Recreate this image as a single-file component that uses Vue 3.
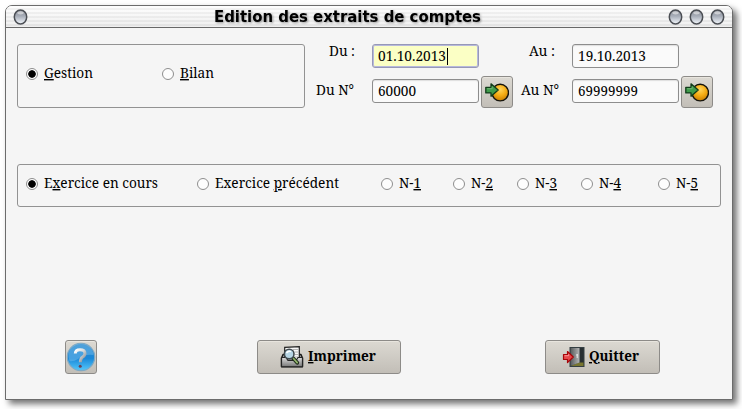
<script setup>
import { ref, h } from 'vue'

const account = ref('G')
const period = ref(0)

const accounts = [
  { id: 'G', parts: ['', 'G', 'estion'], w: 49 },
  { id: 'B', parts: ['', 'B', 'ilan'], w: 34 },
]
const periods = [
  { parts: ['E', 'x', 'ercice en cours'], w: 114 },
  { parts: ['Exercice ', 'p', 'récédent'], w: 124 },
  { parts: ['N-', '1', ''], w: 22 },
  { parts: ['N-', '2', ''], w: 22 },
  { parts: ['N-', '3', ''], w: 22 },
  { parts: ['N-', '4', ''], w: 22 },
  { parts: ['N-', '5', ''], w: 22 },
]

// Caption fitted to a given width, with an underlined accelerator letter
const Caption = (props) =>
  h('svg', { class: 'caption', width: props.w, height: 20 }, [
    h('text', { x: 0, y: 14, textLength: props.w, lengthAdjust: 'spacingAndGlyphs' }, [
      props.parts[0],
      h('tspan', { class: 'accel' }, props.parts[1]),
      props.parts[2],
    ]),
  ])
Caption.props = ['parts', 'w']

const Orb = () =>
  h('svg', { class: 'orb', width: 15, height: 16, viewBox: '0 0 15 16' }, [
    h('ellipse', { cx: 7.5, cy: 8, rx: 6.2, ry: 6.9, fill: 'url(#orbFill)', stroke: '#4c4f55', 'stroke-width': 1.5 }),
    h('ellipse', { cx: 7.5, cy: 3.8, rx: 3.2, ry: 1.6, fill: '#fff', opacity: 0.5 }),
  ])

const PickIcon = () =>
  h('svg', { width: 24, height: 20, viewBox: '0 0 24 20' }, [
    h('circle', { cx: 15.2, cy: 10.6, r: 8.3, fill: 'url(#ballFill)', stroke: '#17150e', 'stroke-width': 1.4 }),
    h('path', { d: 'M0.8 5.3H6V1.8L13.2 8 6 14.2V10.9H0.8Z', fill: '#3f9b4a', stroke: '#123c1a', 'stroke-width': 1.3, 'stroke-linejoin': 'round' }),
    h('path', { d: 'M2.2 6.7H7.2V4.6', fill: 'none', stroke: '#77bd7b', 'stroke-width': 0.8 }),
  ])
</script>

<template>
  <div class="window">
    <svg class="defs" width="0" height="0">
      <defs>
        <linearGradient id="orbFill" x1="0" y1="0" x2="0" y2="1">
          <stop offset="0" stop-color="#878b94" />
          <stop offset=".45" stop-color="#a9afba" />
          <stop offset="1" stop-color="#f2f7fc" />
        </linearGradient>
        <radialGradient id="ballFill" cx=".5" cy=".32" r=".7">
          <stop offset="0" stop-color="#ffd45a" />
          <stop offset=".5" stop-color="#f5ad15" />
          <stop offset="1" stop-color="#c67b00" />
        </radialGradient>
      </defs>
    </svg>

    <header class="titlebar">
      <Orb />
      <svg class="title" width="270" height="20">
        <text x="1" y="15" textLength="267" lengthAdjust="spacingAndGlyphs">Edition des extraits de comptes</text>
      </svg>
      <div class="controls"><Orb /><Orb /><Orb /></div>
    </header>

    <main class="body">
      <section class="top">
        <div class="group accounts">
          <label v-for="a in accounts" :key="a.id" class="option" @click="account = a.id">
            <span class="radio" :class="{ on: account === a.id }"></span>
            <Caption :parts="a.parts" :w="a.w" />
          </label>
        </div>
        <div class="fields">
          <div class="name date"><Caption :parts="['Du :', '', '']" :w="26" /></div>
          <div class="field date active"><Caption :parts="['01.10.2013', '', '']" :w="68" /><i class="caret"></i></div>
          <span></span>
          <div class="name date"><Caption :parts="['Au :', '', '']" :w="26" /></div>
          <div class="field date"><Caption :parts="['19.10.2013', '', '']" :w="68" /></div>
          <span></span>
          <div class="name"><Caption :parts="['Du N°', '', '']" :w="38" /></div>
          <div class="field number"><Caption :parts="['60000', '', '']" :w="38" /></div>
          <button class="btn"><PickIcon /></button>
          <div class="name second"><Caption :parts="['Au N°', '', '']" :w="38" /></div>
          <div class="field number"><Caption :parts="['69999999', '', '']" :w="60" /></div>
          <button class="btn"><PickIcon /></button>
        </div>
      </section>

      <section class="group periods">
        <label v-for="(p, i) in periods" :key="i" class="option" @click="period = i">
          <span class="radio" :class="{ on: period === i }"></span>
          <Caption :parts="p.parts" :w="p.w" />
        </label>
      </section>

      <footer class="actions">
        <button class="btn help">
          <svg width="30" height="30" viewBox="0 0 30 30">
            <defs>
              <linearGradient id="helpFill" x1="0" y1="0" x2="0" y2="1">
                <stop offset="0" stop-color="#2a86c9" />
                <stop offset=".55" stop-color="#1a88d8" />
                <stop offset="1" stop-color="#55c8fb" />
              </linearGradient>
              <linearGradient id="markFill" x1="0" y1="0" x2="1" y2="1">
                <stop offset="0" stop-color="#fff" />
                <stop offset=".45" stop-color="#d5dadd" />
                <stop offset="1" stop-color="#777f86" />
              </linearGradient>
            </defs>
            <circle cx="15" cy="15" r="13.7" fill="url(#helpFill)" stroke="#7fa9c4" stroke-width="1.2" />
            <path d="M2.5 15A12.5 12.5 0 0 1 27.5 13Q18 12 12 17 7 20 3.5 19Z" fill="#7cc2ed" opacity=".45" />
            <path d="M9.3 11.5Q9.5 7.8 14 7.8 19 7.8 19 11.5 19 13.7 16.4 15.2 14.4 16.5 14.4 20.3" fill="none" stroke="url(#markFill)" stroke-width="3" />
            <circle cx="14.2" cy="24.3" r="1.5" fill="#6e4257" />
          </svg>
        </button>
        <button class="btn print">
          <svg width="24" height="24" viewBox="0 0 24 24">
            <defs>
              <linearGradient id="trayFill" x1="0" y1="0" x2="0" y2="1">
                <stop offset="0" stop-color="#dedede" />
                <stop offset="1" stop-color="#777" />
              </linearGradient>
            </defs>
            <path d="M3 9.5H21L22.5 13V21.5H1.5V13Z" fill="#9c9c9c" stroke="#171717" stroke-width="1.4" stroke-linejoin="round" />
            <path d="M4.7 2.4 19.3 1.7V15H4.7Z" fill="#f7f7f7" stroke="#202020" stroke-width="1.2" />
            <path d="M13 4.5H18M15 7H18M15 9.5H18M15 12H18" stroke="#b5b5b5" />
            <path d="M1.5 12.5H6L8 15.5H16L18 12.5H22.5V21.8H1.5Z" fill="url(#trayFill)" stroke="#252525" stroke-width="1.2" stroke-linejoin="round" />
            <path d="M12.5 12.5 17.3 17.8" stroke="#1f2b1b" stroke-width="3.8" stroke-linecap="round" />
            <path d="M13.5 13.5 17.2 17.6" stroke="#92b56b" stroke-width="1.7" stroke-linecap="round" />
            <circle cx="9.2" cy="9" r="4.8" fill="#b6d5e5" stroke="#414a4f" stroke-width="1.6" />
            <path d="M6.5 8.2Q8 5.4 11 6.6" fill="none" stroke="#fff" stroke-width="1.4" />
          </svg>
          <Caption :parts="['', 'I', 'mprimer']" :w="68" />
        </button>
        <button class="btn quit">
          <svg width="24" height="24" viewBox="0 0 24 24">
            <defs>
              <linearGradient id="doorFill" x1="0" y1="0" x2="1" y2="0">
                <stop offset="0" stop-color="#575a5b" />
                <stop offset="1" stop-color="#b4b6b6" />
              </linearGradient>
            </defs>
            <rect x="8" y="2.5" width="14" height="19" fill="#272e31" stroke="#343e42" />
            <path d="M8.5 21 17 17.5H21.5V21Z" fill="#77752f" />
            <path d="M8.5 3H17.5V17.5L8.5 21Z" fill="url(#doorFill)" />
            <path d="M15.2 9V13M14.3 10H15.5" stroke="#eee" stroke-width="1" />
            <path d="M1.5 9.5H5.5V6.5L11.3 12 5.5 17.5V14.5H1.5Z" fill="#e5484b" stroke="#a80509" stroke-width="1.2" stroke-linejoin="round" />
            <path d="M2.5 10.7H6.7V9.2" fill="none" stroke="#ffaaaa" stroke-width=".8" />
          </svg>
          <Caption :parts="['', 'Q', 'uitter']" :w="50" />
        </button>
      </footer>
    </main>
  </div>
</template>

<style>
html { background: #fff; min-height: 100%; }
#app { display: flow-root; height: 409px; overflow: hidden; }
</style>

<style scoped>
* { box-sizing: border-box; }
.window {
  width: 728px; height: 395px; margin: 5px 0 0 5px;
  border: 1px solid #6c6c6c; border-radius: 7px 7px 0 0;
  background: #f5f5f5; box-shadow: 4px 4px 6px rgba(0, 0, 0, .55);
  font-family: "Noto Serif", "DejaVu Serif Condensed", "DejaVu Serif", serif;
  font-size: 14px; color: #000;
}
.defs { display: block; }
.titlebar {
  height: 22px; border-bottom: 1px solid #686868; border-radius: 6px 6px 0 0;
  background: linear-gradient(rgba(255,255,255,.5), rgba(215,215,215,.35)), repeating-linear-gradient(#fcfcfc 0 2px, #e9e9e9 2px 4px);
  display: grid; grid-template-columns: 207px 270px 1fr; align-items: center;
}
.orb { display: block; margin-left: 7px; }
.title { display: block; font: bold 15px "DejaVu Sans", sans-serif; filter: drop-shadow(1px 1px 1px rgba(0,0,0,.4)); }
.title text { fill: #000; }
.controls { display: flex; justify-content: flex-end; gap: 6px; padding-right: 7px; }
.controls .orb { margin: 0; }
.body { padding: 16px 11px 0; }
.top { display: flex; height: 64px; }
.group { border: 1px solid #929292; border-radius: 3px; }
.accounts { width: 288px; height: 64px; padding: 19px 0 0 7px; display: grid; grid-template-columns: 136px 1fr; align-items: start; }
.option { display: flex; align-items: center; height: 20px; }
.radio {
  width: 12px; height: 12px; margin: 0 6px 0 1px; flex: none;
  border: 1px solid #8e8e8e; border-radius: 50%; background: #fdfdfd;
}
.radio.on { background: radial-gradient(circle, #000 0 3.4px, #fdfdfd 4.1px); }
:deep(.caption) { display: block; overflow: visible; flex: none; }
:deep(.caption text) { fill: #000; }
:deep(.accel) { text-decoration: underline; text-decoration-thickness: 1px; text-underline-offset: 2px; text-decoration-skip-ink: none; }
.fields {
  display: grid; grid-template-columns: 67px 107px 34px 59px 107px 34px;
  grid-template-rows: 32px 32px; align-items: center;
}
.name { display: flex; justify-content: flex-end; padding: 0 18px 2px 0; }
.name.second { padding-right: 13px; }
.name.date { padding: 0 17px 16px 0; }
.field {
  height: 24px; border: 1px solid #8d8d8d; border-radius: 3px; background: #fafafa;
  display: flex; align-items: center; padding: 0 0 0 5px; box-shadow: inset 0 1px 1px #dedede;
}
.field.date { align-self: start; padding-top: 1px; }
.field.number { align-self: start; margin-top: 3px; padding-top: 1px; }
.field.active { background: #fbffc5; border-color: #9698b8; box-shadow: inset 0 0 0 1px #b7b9dc; }
.caret { width: 1px; height: 17px; background: #000; margin-left: 1px; }
.btn {
  appearance: none; font: inherit; color: inherit; padding: 0;
  border: 1px solid #8d8b88; border-radius: 3px;
  background: linear-gradient(#dcd9d2, #c2beb7); box-shadow: inset 0 1px #e8e5de;
  display: flex; align-items: center; justify-content: center;
}
.fields .btn { width: 32px; height: 32px; margin-left: 2px; }
.periods {
  height: 43px; margin-top: 56px; width: 704px; padding: 9px 0 0 7px;
  display: grid; grid-template-columns: 171px 184px 72px 64px 64px 77px 1fr; align-items: start;
}
.actions { display: flex; margin: 133px 0 0 48px; font-weight: bold; }
.actions .btn { height: 34px; }
.help { width: 32px; }
.print { width: 144px; margin-left: 160px; gap: 4px; padding-right: 2px; }
.quit { width: 115px; margin-left: 144px; gap: 3px; padding-right: 4px; }
</style>
